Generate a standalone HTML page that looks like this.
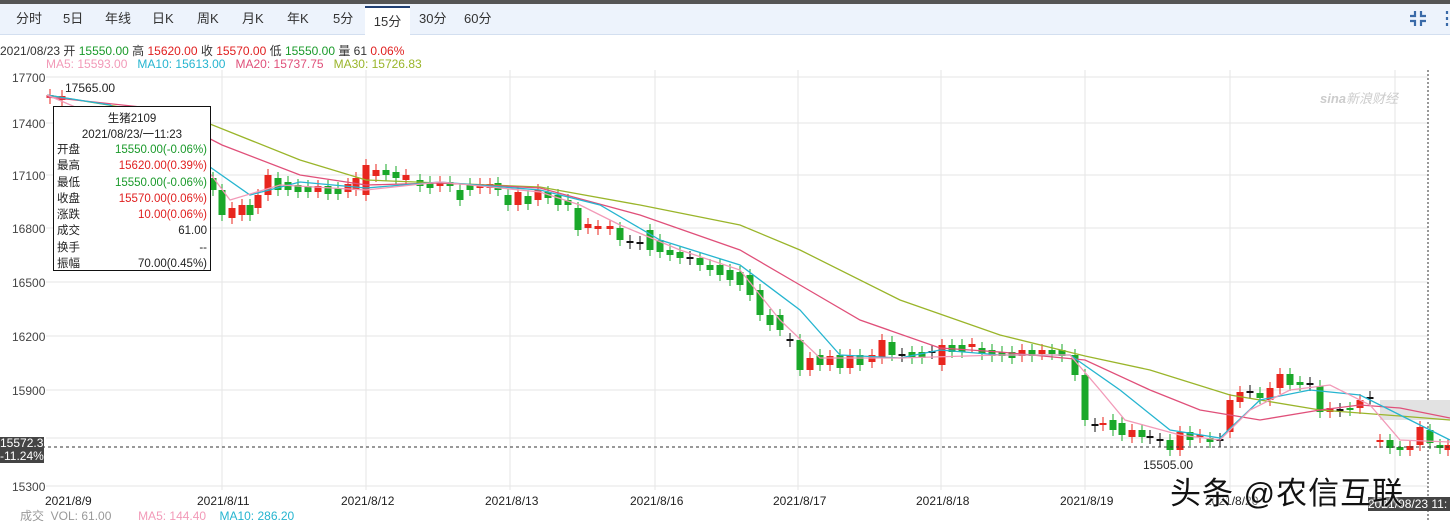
<!DOCTYPE html><html><head><meta charset="utf-8"><style>
body{margin:0;width:1450px;height:521px;overflow:hidden;background:#fff;font-family:"Liberation Sans","Noto Sans CJK SC",sans-serif;position:relative}
.top{position:absolute;left:0;top:0;width:1450px;height:4px;background:#555}
.bar{position:absolute;left:0;top:4px;width:1450px;height:30px;background:#edf3fc;border-bottom:1px solid #d3dff0}
.tab{position:absolute;top:4px;height:30px;line-height:30px;font-size:13px;color:#333}
.act{background:#fff;border-top:2px solid #1f3f73;height:29px;line-height:28px;top:6px}
.t{position:absolute;font-size:12px;white-space:nowrap}
.g{color:#1a9a2a}.r{color:#e02020}
</style></head><body>
<div class="top"></div><div class="bar"></div>
<div class="tab" style="left:16px">分时</div><div class="tab" style="left:63px">5日</div><div class="tab" style="left:105px">年线</div><div class="tab" style="left:152px">日K</div><div class="tab" style="left:197px">周K</div><div class="tab" style="left:242px">月K</div><div class="tab" style="left:287px">年K</div><div class="tab" style="left:333px">5分</div>
<div class="tab act" style="left:365px;width:45px;text-align:center">15分</div>
<div class="tab" style="left:419px">30分</div><div class="tab" style="left:464px">60分</div>
<svg style="position:absolute;left:1408px;top:8px" width="42" height="20"><g fill="none" stroke="#3a6aa8" stroke-width="2.2"><path d="M7 3v5h-5M13 3v5h5M7 18v-5h-5M13 18v-5h5"/><path d="M39 3v3M39 9v3M39 15v3"/></g></svg>
<div class="t" style="left:0;top:42px;color:#333">2021/08/23 开 <span class="g">15550.00</span> 高 <span class="r">15620.00</span> 收 <span class="r">15570.00</span> 低 <span class="g">15550.00</span> 量 61 <span class="r">0.06%</span></div>
<div class="t" style="left:46px;top:57px;color:#f29ab8">MA5: 15593.00 &nbsp;&nbsp;<span style="color:#26b5d0">MA10: 15613.00</span> &nbsp;&nbsp;<span style="color:#e0507a">MA20: 15737.75</span> &nbsp;&nbsp;<span style="color:#9ab52a">MA30: 15726.83</span></div>
<svg id="c" style="position:absolute;left:0;top:0" width="1450" height="521"></svg>
<div class="t" style="left:12px;top:71px;color:#444">17700</div><div class="t" style="left:12px;top:117px;color:#444">17400</div><div class="t" style="left:12px;top:169px;color:#444">17100</div><div class="t" style="left:12px;top:222px;color:#444">16800</div><div class="t" style="left:12px;top:276px;color:#444">16500</div><div class="t" style="left:12px;top:330px;color:#444">16200</div><div class="t" style="left:12px;top:384px;color:#444">15900</div><div class="t" style="left:12px;top:480px;color:#444">15300</div>
<div class="t" style="left:65px;top:81px;color:#222">17565.00</div>
<div class="t" style="left:1143px;top:458px;color:#222">15505.00</div>
<div style="position:absolute;left:0;top:437px;width:44px;height:26px;background:#444;color:#fff;font-size:12px;line-height:13px">15572.3<br>-11.24%</div>
<div style="position:absolute;left:53px;top:106px;width:156px;height:163px;border:1px solid #111;background:#fff;font-size:11.5px;color:#222">
<div style="text-align:center;margin-top:3px">生猪2109</div><div style="text-align:center">2021/08/23/一11:23</div>
<div style="line-height:16.3px;padding:0 3px">
<div>开盘<span class="g" style="float:right">15550.00(-0.06%)</span></div>
<div>最高<span class="r" style="float:right">15620.00(0.39%)</span></div>
<div>最低<span class="g" style="float:right">15550.00(-0.06%)</span></div>
<div>收盘<span class="r" style="float:right">15570.00(0.06%)</span></div>
<div>涨跌<span class="r" style="float:right">10.00(0.06%)</span></div>
<div>成交<span style="float:right">61.00</span></div>
<div>换手<span style="float:right">--</span></div>
<div>振幅<span style="float:right">70.00(0.45%)</span></div></div></div>
<div class="t" style="left:45px;top:494px;color:#222">2021/8/9</div><div class="t" style="left:197px;top:494px;color:#222">2021/8/11</div><div class="t" style="left:341px;top:494px;color:#222">2021/8/12</div><div class="t" style="left:485px;top:494px;color:#222">2021/8/13</div><div class="t" style="left:630px;top:494px;color:#222">2021/8/16</div><div class="t" style="left:773px;top:494px;color:#222">2021/8/17</div><div class="t" style="left:916px;top:494px;color:#222">2021/8/18</div><div class="t" style="left:1060px;top:494px;color:#222">2021/8/19</div><div class="t" style="left:1205px;top:494px;color:#222">2021/8/20</div>
<div style="position:absolute;left:1368px;top:497px;width:82px;height:14px;background:#444;color:#fff;font-size:12px;line-height:14px">2021/08/23 11:</div>
<div class="t" style="left:20px;top:507px;color:#999">成交 &nbsp;VOL: 61.00 &nbsp;&nbsp;&nbsp;&nbsp;&nbsp;&nbsp;&nbsp;<span style="color:#f29ab8">MA5: 144.40</span> &nbsp;&nbsp;&nbsp;<span style="color:#26b5d0">MA10: 286.20</span></div>
<div style="position:absolute;left:1320px;top:88px;color:#ccc;font-style:italic;font-size:13px;font-weight:bold">sina<span style="font-weight:normal">新浪财经</span></div>
<div style="position:absolute;left:1170px;top:468px;font-size:31px;color:#111;letter-spacing:1px;text-shadow:0 0 2px #fff,0 0 3px #fff">头条 @农信互联</div>
<script>
var s=document.getElementById('c'),h='';
var gx=[222,366,510,655,798,941,1085,1230,1395],gy=[77,123,175,228,282,336,390,438,486];
gx.forEach(function(x){h+='<line x1="'+x+'" y1="70" x2="'+x+'" y2="490" stroke="#e6e6e6"/>'});
gy.forEach(function(y){h+='<line x1="46" y1="'+y+'" x2="1428" y2="'+y+'" stroke="#e6e6e6"/>'});
h+='<line x1="1428" y1="70" x2="1428" y2="521" stroke="#333" stroke-dasharray="2,2"/>';
h+='<rect x="1380" y="400" width="70" height="20" fill="#e2e2e2"/>';
var c=[[50,95,98,1],[62,96,100,1],[213,178,190,0],[222,190,215,0],[232,208,218,1],[242,205,215,1],[250,205,215,0],[258,195,208,1],[268,175,195,1],[278,178,190,0],[288,182,190,0],[298,185,192,0],[308,186,192,0],[318,186,192,1],[328,186,194,0],[338,188,194,0],[348,184,192,1],[356,178,190,1],[366,165,195,1],[376,170,176,1],[386,170,175,0],[396,172,178,0],[406,175,180,1],[420,180,186,0],[430,182,188,0],[440,182,186,1],[450,182,186,0],[460,190,200,0],[470,184,190,0],[480,184,188,1],[490,184,188,1],[498,183,190,0],[508,195,205,0],[518,192,205,1],[528,196,204,0],[538,190,200,1],[548,192,198,0],[558,195,205,0],[568,200,205,0],[578,208,230,0],[588,224,228,1],[598,226,229,1],[610,226,229,1],[620,228,240,0],[630,241,243,2],[640,242,244,2],[650,230,250,0],[660,240,252,0],[670,250,255,0],[680,252,258,0],[690,257,259,2],[700,258,265,0],[710,265,270,0],[720,265,275,0],[730,270,280,0],[740,272,285,0],[750,275,295,0],[760,290,315,0],[770,315,325,0],[780,315,330,0],[790,339,341,2],[800,340,370,0],[810,358,370,1],[820,355,365,0],[830,356,365,1],[840,355,368,0],[850,355,368,1],[860,355,365,0],[872,355,362,1],[882,340,358,1],[892,342,355,0],[902,354,356,2],[912,352,358,0],[922,352,358,0],[932,351,353,2],[942,345,365,1],[952,345,352,0],[962,345,352,0],[972,344,347,1],[982,348,354,0],[992,350,356,0],[1002,352,356,0],[1012,352,358,0],[1022,350,356,1],[1032,350,356,0],[1042,350,354,1],[1052,350,354,0],[1062,350,356,0],[1075,355,375,0],[1085,375,420,0],[1095,424,426,2],[1103,423,425,1],[1113,420,430,0],[1122,423,435,0],[1132,430,437,1],[1142,430,437,0],[1150,436,438,2],[1160,439,441,2],[1170,440,450,0],[1180,432,450,1],[1190,432,440,0],[1200,435,437,1],[1210,438,442,0],[1220,439,441,2],[1230,400,432,1],[1240,392,402,1],[1250,391,393,2],[1260,393,398,0],[1270,388,400,1],[1280,374,388,1],[1290,374,385,0],[1300,382,385,0],[1310,383,385,2],[1320,386,412,0],[1330,408,412,1],[1340,409,411,2],[1350,408,410,0],[1360,400,408,1],[1370,397,399,2],[1380,440,442,1],[1390,440,448,0],[1400,447,450,0],[1410,446,450,1],[1420,427,445,1],[1430,430,443,0],[1440,445,448,0],[1448,445,450,1]];
c.forEach(function(k){var col=k[3]==0?'#1aa82a':k[3]==1?'#e8261e':'#111';h+='<line x1="'+k[0]+'" y1="'+(k[1]-6)+'" x2="'+k[0]+'" y2="'+(k[2]+6)+'" stroke="'+col+'"/><rect x="'+(k[0]-3.5)+'" y="'+k[1]+'" width="7" height="'+Math.max(2,k[2]-k[1])+'" fill="'+col+'"/>'});
function P(p,col){h+='<polyline fill="none" stroke="'+col+'" stroke-width="1.3" points="'+p+'"/>'}
P('47,95 200,120 300,160 366,180 440,183 540,187 640,205 740,225 800,250 900,300 1000,335 1085,356 1150,370 1230,395 1320,410 1400,416 1450,420','#9ab52a');
P('47,97 150,108 222,145 300,175 366,185 440,183 540,188 640,215 740,250 800,285 860,320 940,348 1000,352 1085,360 1150,390 1200,410 1260,420 1320,410 1360,405 1400,408 1450,418','#e0507a');
P('47,95 110,105 200,160 250,195 300,182 366,188 440,182 540,190 600,205 660,240 740,265 800,310 840,355 900,358 940,350 1000,355 1070,355 1120,390 1170,430 1220,438 1260,400 1310,390 1360,395 1400,415 1450,440','#26b5d0');
P('47,95 200,160 230,200 280,185 366,190 440,182 540,192 580,205 620,225 680,250 740,270 780,320 820,358 900,358 1000,355 1070,355 1100,390 1125,420 1180,435 1220,440 1250,410 1290,390 1330,385 1370,405 1400,440 1450,442','#f29ab8');
h+='<line x1="0" y1="447" x2="1450" y2="447" stroke="#333" stroke-dasharray="3,3"/>';
s.innerHTML=h;
</script>
</body></html>
